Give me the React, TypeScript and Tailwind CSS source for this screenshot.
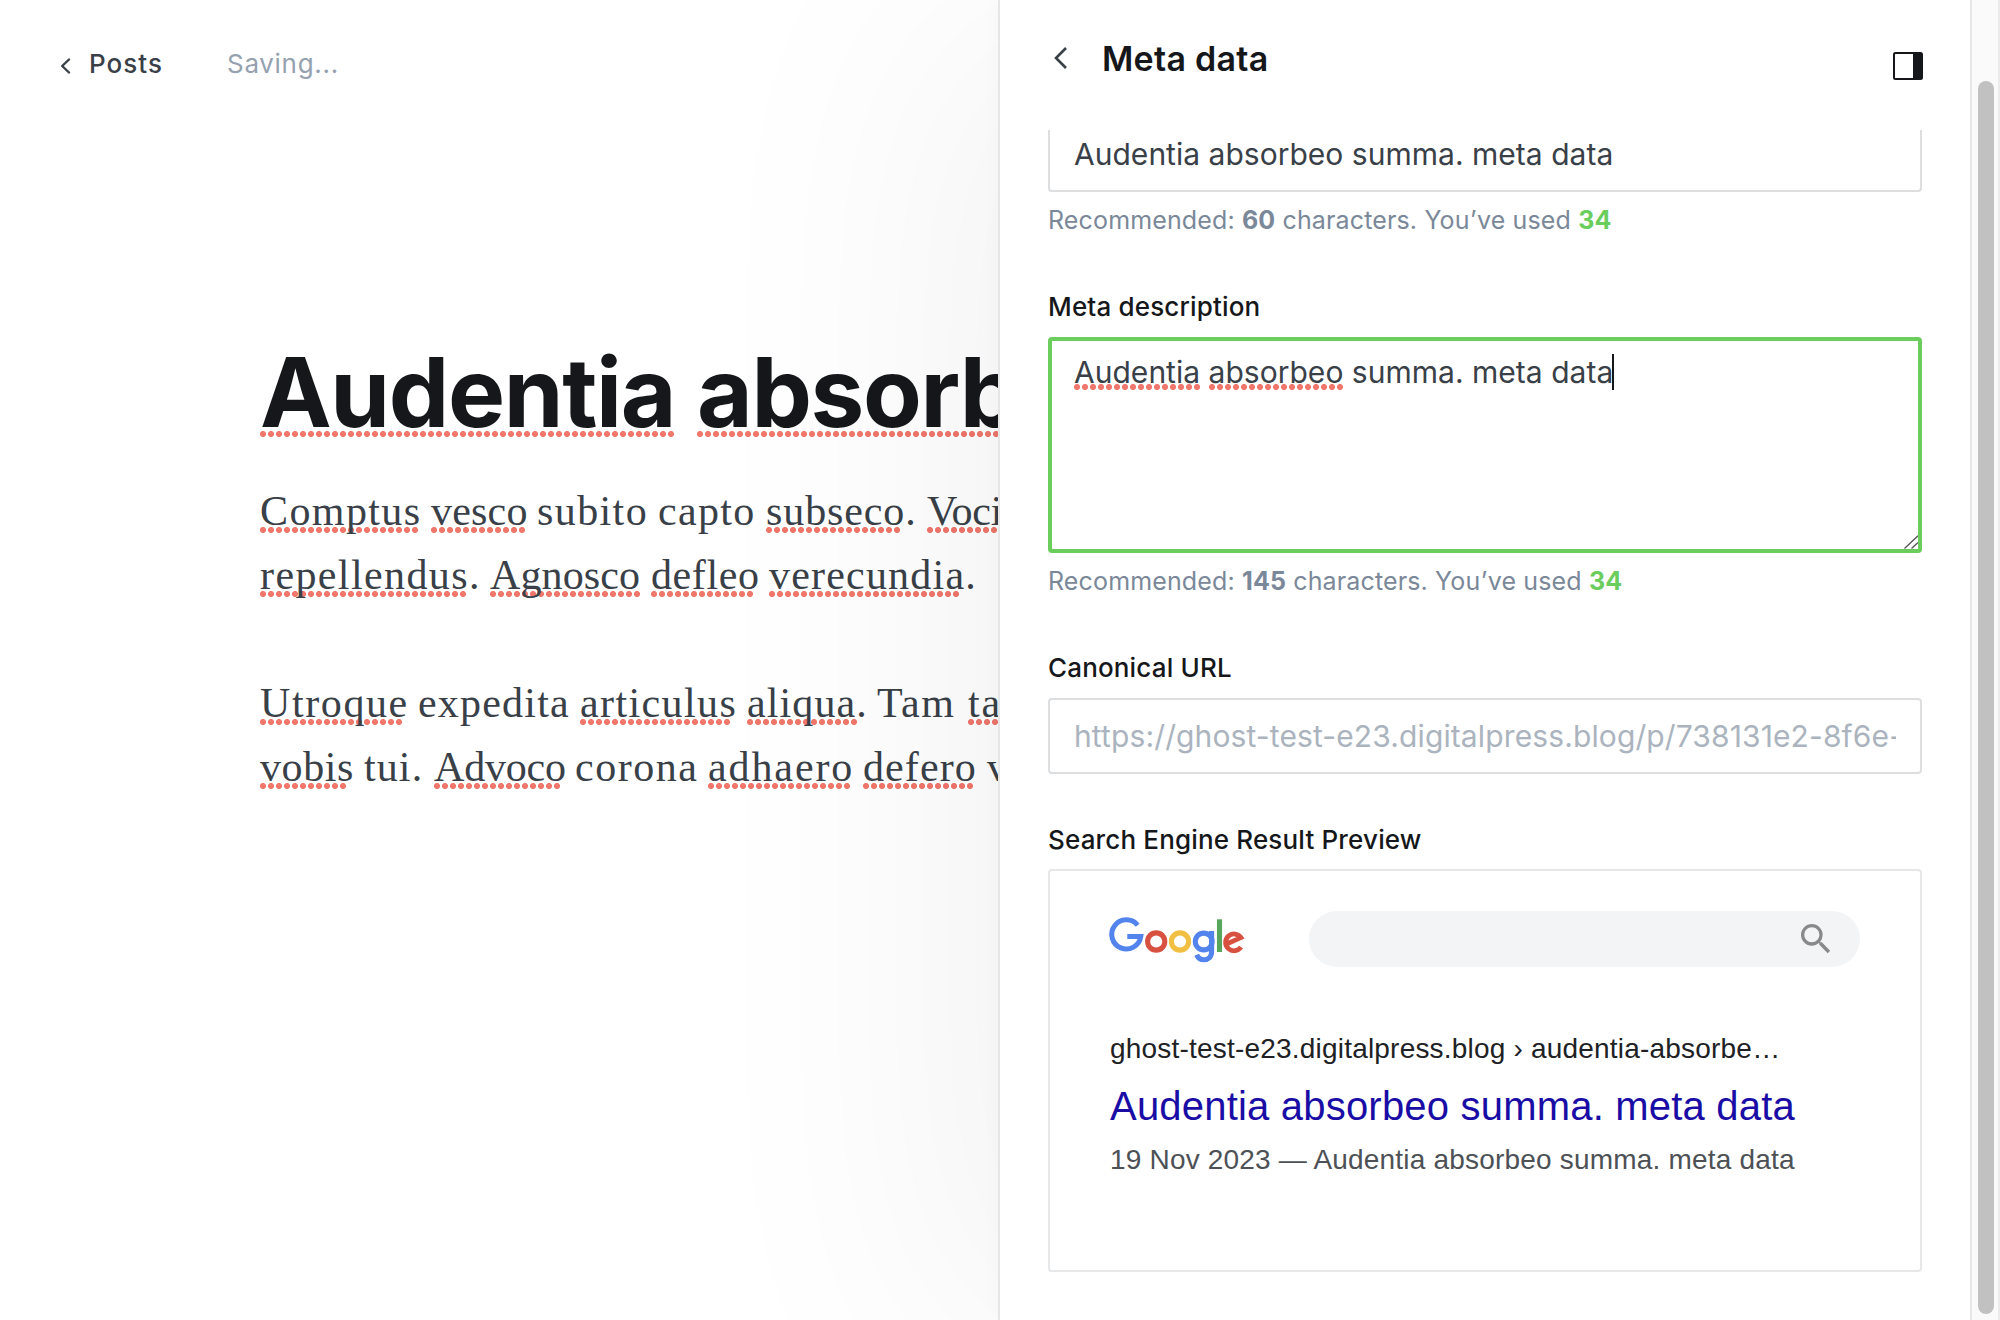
import React from "react";

const DOTS =
  "bg-[radial-gradient(circle_at_3px_3px,#f0776c_2.7px,transparent_3.3px)] bg-repeat-x";

type Piece = { text: string; slot: string; mark?: string; tail?: string };

const LINES: Piece[][] = [
  [
    { text: "Comptus", slot: "w-[171px] tracking-[1.4px]", mark: "w-[158px]" },
    { text: "vesco", slot: "w-[106px] tracking-[0.2px]", mark: "w-[94px]" },
    { text: "subito", slot: "w-[121px] tracking-[1.4px]" },
    { text: "capto", slot: "w-[108px] tracking-[1.3px]" },
    { text: "subseco", slot: "w-[161px] tracking-[0.9px]", mark: "w-[134px]", tail: "." },
    { text: "Vociferor", slot: "w-[171px] tracking-[-0.3px]", mark: "w-[158px]" },
  ],
  [
    { text: "repellendus", slot: "w-[230px] tracking-[1.4px]", mark: "w-[206px]", tail: "." },
    { text: "Agnosco", slot: "w-[161px] tracking-[0.1px]", mark: "w-[150px]" },
    { text: "defleo", slot: "w-[118px] tracking-[0.6px]", mark: "w-[102px]" },
    { text: "verecundia", slot: "w-[220px] tracking-[1.2px]", mark: "w-[190px]", tail: "." },
  ],
  [],
  [
    { text: "Utroque", slot: "w-[158px] tracking-[1.6px]", mark: "w-[142px]" },
    { text: "expedita", slot: "w-[162px] tracking-[1.2px]" },
    { text: "articulus", slot: "w-[167px] tracking-[1.4px]", mark: "w-[150px]" },
    { text: "aliqua", slot: "w-[130px] tracking-[1.1px]", mark: "w-[110px]", tail: "." },
    { text: "Tam", slot: "w-[91px] tracking-[1.4px]" },
    { text: "tamen", slot: "w-[120px] tracking-[1.8px]", mark: "w-[110px]" },
  ],
  [
    { text: "vobis", slot: "w-[104px] tracking-[0.6px]", mark: "w-[86px]" },
    { text: "tui.", slot: "w-[70px] tracking-[1.1px]" },
    { text: "Advoco", slot: "w-[141px] tracking-[-0.2px]", mark: "w-[126px]" },
    { text: "corona", slot: "w-[133px] tracking-[1.5px]" },
    { text: "adhaero", slot: "w-[155px] tracking-[1.9px]", mark: "w-[142px]" },
    { text: "defero", slot: "w-[124px] tracking-[1.1px]", mark: "w-[110px]" },
    { text: "vox", slot: "w-[80px] tracking-[0px]" },
  ],
];

function BodyWord({ text, slot, mark, tail }: Piece) {
  return (
    <span className={`block shrink-0 whitespace-nowrap ${slot}`}>
      {mark ? (
        <span className="relative">
          {text}
          <span className={`absolute left-0 top-[39px] -z-10 h-[6px] bg-[length:8px_6px] ${DOTS} ${mark}`} />
        </span>
      ) : (
        text
      )}
      {tail}
    </span>
  );
}

function GoogleLogo() {
  return (
    <svg width="135" height="46" viewBox="0 0 135 46" fill="none" strokeWidth="5.1" className="overflow-visible">
      <path d="M27.700 7.200A14.600 14.600 0 1 0 30.800 18.500H17.300" stroke="#5383ec" strokeWidth="5" />
      <circle cx="46.2" cy="23.5" r="8.6" stroke="#d85140" />
      <circle cx="70" cy="23.5" r="8.6" stroke="#f1bf42" />
      <circle cx="93.7" cy="23.5" r="8.4" stroke="#5383ec" />
      <path d="M101.6 13V33.5C101.6 39 98.2 41.8 93.9 41.8C90.4 41.8 87.9 39.8 86.7 36.8" stroke="#5383ec" />
      <path d="M109.5 1.3V34" stroke="#58a55c" />
      <path d="M131 29A8.400 8.400 0 1 1 130.900 19.600L116.600 26" stroke="#d85140" strokeWidth="4.8" />
    </svg>
  );
}

function Label({ children, className }: { children: React.ReactNode; className: string }) {
  return (
    <div className={`h-10 shrink-0 text-[26px] font-medium leading-10 tracking-[0.16px] text-[#15171a] ${className}`}>
      {children}
    </div>
  );
}

function Hint({ limit, used }: { limit: number; used: number }) {
  return (
    <p className="mt-2 h-10 shrink-0 whitespace-nowrap text-[25px] leading-10 tracking-[0.14px] text-[#7a8899]">
      Recommended: <b className="font-bold">{limit}</b> characters. You’ve used{" "}
      <b className="font-bold text-[#6acd5c]">{used}</b>
    </p>
  );
}

function Editor() {
  return (
    <main className="flex w-[998px] shrink-0 flex-col overflow-hidden">
      <header className="flex h-[339px] items-start pl-[60px] pt-11 text-[26px] leading-10">
        <svg width="12" height="16" viewBox="0 0 12 16" fill="none" className="mt-[14px]">
          <path d="M9 1.5L2.2 8L9 14.5" stroke="#394047" strokeWidth="2.4" strokeLinecap="round" strokeLinejoin="round" />
        </svg>
        <span className="ml-[17px] w-[138px] font-medium tracking-[1.05px] text-[#394047]">Posts</span>
        <span className="tracking-[0.7px] text-[#95a1af]">Saving...</span>
      </header>
      <h1 className="isolate ml-[260px] flex h-[106px] whitespace-nowrap text-[96px] font-bold leading-[106px] tracking-[-1.35px] text-[#15171a]">
        <span className="relative block w-[437px] shrink-0">
          Audentia
          <span className={`absolute left-0 top-[92px] -z-10 h-[6px] w-[414px] bg-[length:8px_6px] ${DOTS}`} />
        </span>
        <span className="relative block w-[437px] shrink-0">
          absorbeo
          <span className={`absolute left-0 top-[92px] -z-10 h-[6px] w-[430px] bg-[length:8px_6px] ${DOTS}`} />
        </span>
      </h1>
      <div className="isolate ml-[260px] mt-[34px] font-[Georgia,'Liberation_Serif',serif] text-[42px] leading-[64px] text-[#394047]">
        {LINES.map((line, i) => (
          <p key={i} className="flex h-16">
            {line.map((w) => (
              <BodyWord key={w.text} {...w} />
            ))}
          </p>
        ))}
      </div>
    </main>
  );
}

function SettingsPanel() {
  return (
    <aside className="relative z-10 flex w-[974px] shrink-0 flex-col border-x-2 border-[#e6e6e6] bg-white pl-12 pr-12 shadow-[-2px_0_20px_rgba(0,0,0,0.02),-60px_20px_300px_rgba(0,0,0,0.052)]">
      <header className="flex h-[130px] shrink-0 items-start">
        <svg width="16" height="24" viewBox="0 0 16 24" fill="none" className="ml-[5px] mt-[46px]">
          <path d="M13 2L3 12L13 22" stroke="#394047" strokeWidth="2.6" />
        </svg>
        <h2 className="ml-[33px] mt-[35px] text-[34px] font-semibold leading-[48px] tracking-[0.25px] text-[#15171a]">
          Meta data
        </h2>
        <svg width="30" height="28" viewBox="0 0 30 28" className="-mr-px ml-auto mt-[52px]">
          <rect x="1" y="1" width="28" height="26" rx="1.5" fill="none" stroke="#15171a" strokeWidth="2" />
          <path d="M20 1h8.500v26H20z" fill="#15171a" />
        </svg>
      </header>

      <div className="flex h-[62px] shrink-0 items-start rounded-b border-2 border-t-0 border-[#dddedf] pl-6 text-[30px] leading-[48px] tracking-[0.02px] text-[#394047]">
        Audentia absorbeo summa. meta data
      </div>
      <Hint limit={60} used={34} />

      <Label className="mt-[47px]">Meta description</Label>
      <div className="relative isolate mt-[10px] h-[216px] shrink-0 rounded border-4 border-[#6acd5c] pl-[22px] pt-[7px] text-[30px] leading-[48px] tracking-[0.02px] text-[#394047]">
        <div className="flex items-center whitespace-pre">
          <span>
            <span className="relative">
              Audentia
              <span className={`absolute left-0 top-[30px] -z-10 h-[6px] w-[126px] bg-[length:8px_6px] ${DOTS}`} />
            </span>{" "}
            <span className="relative">
              absorbeo
              <span className={`absolute left-0 top-[30px] -z-10 h-[6px] w-[134px] bg-[length:8px_6px] ${DOTS}`} />
            </span>{" "}
            summa. meta data
          </span>
          <span className="-ml-px h-9 w-[2px] bg-[#15171a]" />
        </div>
        <svg width="14" height="14" viewBox="0 0 14 14" className="absolute bottom-0 right-0">
          <path d="M0.500 13.500L14 0.800M7.500 13.500L14 7.500" stroke="#555" strokeWidth="1.3" fill="none" />
        </svg>
      </div>
      <Hint limit={145} used={34} />

      <Label className="mt-[47px]">Canonical URL</Label>
      <div className="mt-[10px] h-[76px] shrink-0 rounded border-2 border-[#dddedf] px-6 text-[30px] leading-[73px] tracking-[0.12px] text-[#abb4be]">
        <div className="h-[72px] overflow-hidden whitespace-nowrap">
          https://ghost-test-e23.digitalpress.blog/p/738131e2-8f6e-4
        </div>
      </div>

      <Label className="mt-[46px]">Search Engine Result Preview</Label>
      <div className="mt-[9px] h-[403px] shrink-0 rounded border-2 border-[#e6e7e8] px-[60px] pt-10 font-['Liberation_Sans',Arial,sans-serif]">
        <div className="flex h-14 justify-between">
          <div className="pt-[7px]">
            <GoogleLogo />
          </div>
          <div className="flex w-[551px] items-center justify-end rounded-full bg-[#f3f4f6] pr-6">
            <svg width="40" height="40" viewBox="0 0 24 24" fill="#878a8c">
              <path d="M15.500 14h-.79l-.28-.27A6.471 6.471 0 0 0 16 9.500 6.500 6.500 0 1 0 9.500 16c1.610 0 3.090-.590 4.230-1.570l.27.280v.790l5 4.990L20.490 19l-4.990-5zm-6 0C7.010 14 5 11.990 5 9.500S7.010 5 9.500 5 14 7.010 14 9.500 11.990 14 9.500 14z" />
            </svg>
          </div>
        </div>
        <div className="mt-[62px] h-10 whitespace-nowrap text-[28px] leading-10 tracking-[0.2px] text-[#202124]">
          ghost-test-e23.digitalpress.blog › audentia-absorbe…
        </div>
        <div className="mt-[13px] h-12 whitespace-nowrap text-[40px] leading-[48px] tracking-[0.2px] text-[#1a0da6]">
          Audentia absorbeo summa. meta data
        </div>
        <div className="mt-[10px] h-10 whitespace-nowrap text-[28px] leading-10 tracking-[0.19px] text-[#4d5156]">
          19 Nov 2023 — Audentia absorbeo summa. meta data
        </div>
      </div>
    </aside>
  );
}

export default function App() {
  return (
    <div className="flex h-[1320px] w-[2000px] overflow-hidden bg-white font-[Inter,sans-serif] antialiased">
      <Editor />
      <SettingsPanel />
      <div className="relative z-20 flex w-7 shrink-0 border-r-2 border-[#ebebeb] bg-[#fafafa] pl-[6px] pt-[81px]">
        <div className="h-[1233px] w-4 rounded-full bg-[#c1c1c1]" />
      </div>
    </div>
  );
}
